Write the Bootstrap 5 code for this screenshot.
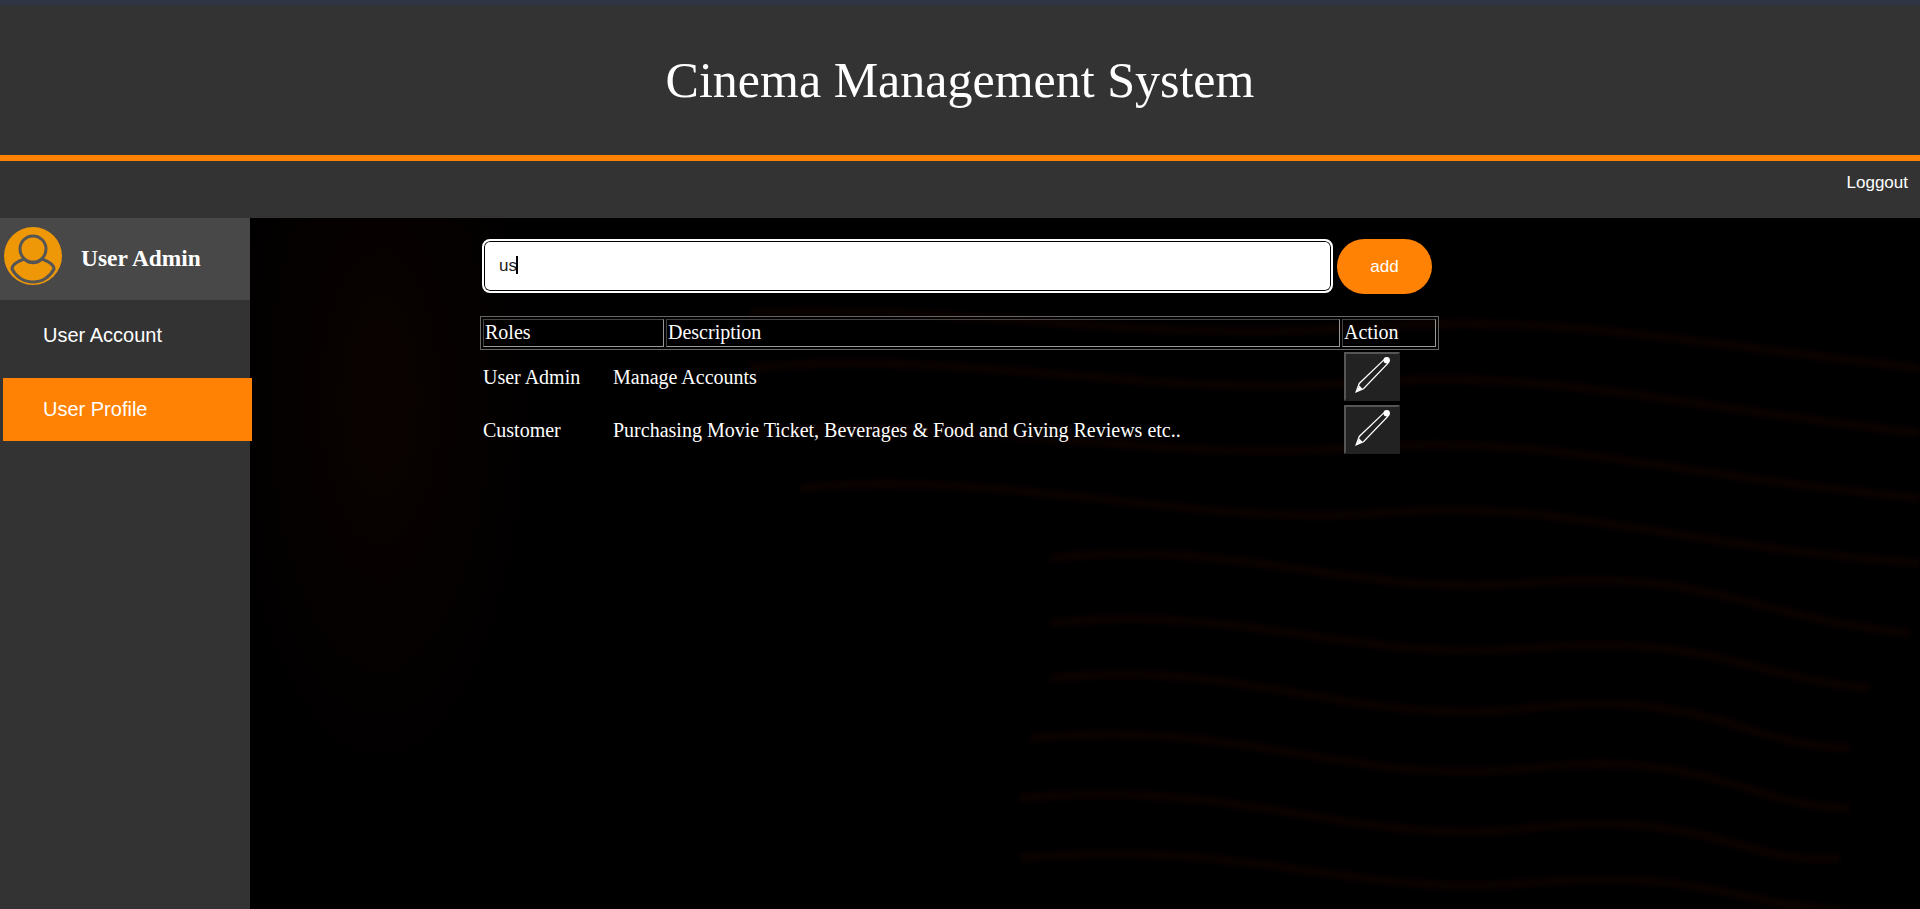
<!DOCTYPE html>
<html lang="en">
<head>
<meta charset="utf-8">
<title>Cinema Management System</title>
<link rel="stylesheet" href="https://cdn.jsdelivr.net/npm/bootstrap@5.3.0/dist/css/bootstrap.min.css">
<style>
html,body{height:100%;}
body{background:#000;color:#fff;font-family:"Liberation Serif",serif;overflow:hidden;}
.page-strip{height:5px;background:#2f3445;}
.page-head{height:150px;background:#333;}
.page-title{font-family:"Liberation Serif",serif;font-size:50px;font-weight:400;line-height:1;margin:0;}
.rule{height:6px;background:#ff8205;}
.sub-bar{height:57px;background:#333;padding-right:12px;padding-bottom:13px;}
.logout{color:#fff;text-decoration:none;font:17px "Liberation Sans",sans-serif;}
.shell{height:691px;}
.side{width:250px;background:#333;flex:none;position:relative;z-index:2;}
.who{height:82px;background:#484848;padding-left:4px;}
.who svg{margin-top:-6px;}
.who-name{font-size:23.4px;font-weight:700;margin-left:19px;}
.side-link{display:flex;align-items:center;height:63px;padding-left:40px;color:#fff;text-decoration:none;font:20px "Liberation Sans",sans-serif;margin-left:3px;margin-right:-2px;}
.side-link.current{background:#ff8205;}
.side-gap{margin-top:4px;margin-bottom:11px;}
.stage{position:relative;background:radial-gradient(ellipse 170px 420px at 130px 180px,#0a0200,#000 100%);overflow:hidden;}
.waves{position:absolute;inset:0;width:100%;height:100%;filter:blur(2px);}
.stage-body{position:relative;width:960px;margin-left:230px;padding-top:21px;}
.search-wrap{position:relative;width:851px;height:54px;margin-left:2px;}
.search-box{width:100%;height:100%;border:2px solid #fff;border-radius:8px;outline:0;padding:0 15px;font:17px "Liberation Sans",sans-serif;background:#fff;box-shadow:inset 0 0 0 1px #000;color:#222;}
.caret-bar{position:absolute;left:34px;top:17px;width:2px;height:18px;background:#000;}
.add-btn{width:95px;height:55px;margin-left:4px;border:0;border-radius:28px;background:#ff8205;color:#fff;font:17px "Liberation Sans",sans-serif;}
.add-btn:hover{background:#ff8205;color:#fff;}
.head-table{width:959px;margin-top:22px;border-collapse:separate;border-spacing:2px;border:1px solid #666;font-size:20px;table-layout:fixed;}
.head-table th{font-weight:400;border:1px solid;border-color:#444 #999 #999 #444;padding:0 1px 1px;height:28px;line-height:25px;}
.role-table{border-collapse:separate;border-spacing:0;font-size:20px;table-layout:fixed;width:959px;}
.role-table td{padding:0 0 0 3px;vertical-align:middle;height:53px;}
.edit-btn{display:flex;align-items:center;justify-content:center;width:56px;height:49px;margin-left:-2px;padding:0;background:#222;border:2px solid;border-color:#555 #222 #222 #555;}
.edit-btn svg{margin-top:-4px;margin-left:2px;}
</style>
</head>
<body>
<div class="page-strip"></div>
<header class="page-head d-flex align-items-center justify-content-center">
  <h1 class="page-title">Cinema Management System</h1>
</header>
<div class="rule"></div>
<div class="sub-bar d-flex align-items-center justify-content-end">
  <a class="logout" href="#">Loggout</a>
</div>
<div class="shell d-flex">
  <aside class="side">
    <div class="who d-flex align-items-center">
      <svg width="58" height="58" viewBox="0 0 58 58" aria-hidden="true">
        <circle cx="29" cy="29" r="29" fill="#ee9707"/>
        <circle cx="29" cy="22" r="13" fill="none" stroke="#555" stroke-width="3"/>
        <path d="M20 32C12 35 8 39 8 42C12 50 20 55 29 55C38 55 46 50 50 42C50 39 46 35 38 32C33 37 25 37 20 32Z" fill="none" stroke="#555" stroke-width="3"/>
      </svg>
      <span class="who-name">User Admin</span>
    </div>
    <a class="side-link side-gap" href="#">User Account</a>
    <a class="side-link current" href="#">User Profile</a>
  </aside>
  <main class="stage flex-grow-1">
    <svg class="waves" viewBox="0 0 1670 691" preserveAspectRatio="none" fill="none" stroke="#0a0200" stroke-width="9" aria-hidden="true">
      <path d="M500 95C700 85 900 125 1100 110S1400 120 1670 150"/>
      <path d="M500 150C700 130 900 180 1100 165S1400 185 1670 215"/>
      <path d="M500 215C700 195 900 245 1100 230S1400 255 1670 280"/>
      <path d="M550 270C750 250 950 310 1130 295S1400 325 1670 345"/>
      <path d="M800 340C1000 320 1100 380 1280 365S1500 400 1660 415"/>
      <path d="M800 405C1000 385 1100 445 1280 430S1500 460 1620 470"/>
      <path d="M800 460C1000 440 1100 510 1280 490S1500 530 1600 530"/>
      <path d="M780 520C1000 500 1100 570 1280 550S1500 590 1600 590"/>
      <path d="M770 580C1000 560 1100 630 1280 610S1500 650 1590 640"/>
      <path d="M770 640C1000 620 1100 680 1280 665S1500 691 1590 691"/>
    </svg>
    <div class="stage-body">
      <form class="d-flex align-items-start">
        <div class="search-wrap">
          <input class="search-box" type="text" value="us" aria-label="Search roles">
          <span class="caret-bar"></span>
        </div>
        <button class="btn add-btn" type="button">add</button>
      </form>
      <table class="head-table">
        <colgroup><col style="width:181px"><col><col style="width:94px"></colgroup>
        <thead><tr><th>Roles</th><th>Description</th><th>Action</th></tr></thead>
      </table>
      <table class="role-table">
        <colgroup><col style="width:130px"><col><col style="width:96px"></colgroup>
        <tbody>
          <tr><td>User Admin</td><td>Manage Accounts</td><td><button class="edit-btn" type="button" aria-label="Edit"><svg width="38" height="38" viewBox="0 0 36 36" fill="none" aria-hidden="true"><path d="M2 34L5 26L29 3C31 2 33 4 32 7L9 31Z" stroke="#fff" stroke-width="1.2"/><path d="M2 34L5 28L8 31Z" fill="#fff"/><circle cx="31" cy="4" r="3" fill="#fff"/></svg></button></td></tr>
          <tr><td>Customer</td><td>Purchasing Movie Ticket, Beverages &amp; Food and Giving Reviews etc..</td><td><button class="edit-btn" type="button" aria-label="Edit"><svg width="38" height="38" viewBox="0 0 36 36" fill="none" aria-hidden="true"><path d="M2 34L5 26L29 3C31 2 33 4 32 7L9 31Z" stroke="#fff" stroke-width="1.2"/><path d="M2 34L5 28L8 31Z" fill="#fff"/><circle cx="31" cy="4" r="3" fill="#fff"/></svg></button></td></tr>
        </tbody>
      </table>
    </div>
  </main>
</div>
<script src="https://cdn.jsdelivr.net/npm/bootstrap@5.3.0/dist/js/bootstrap.bundle.min.js"></script>
</body>
</html>
